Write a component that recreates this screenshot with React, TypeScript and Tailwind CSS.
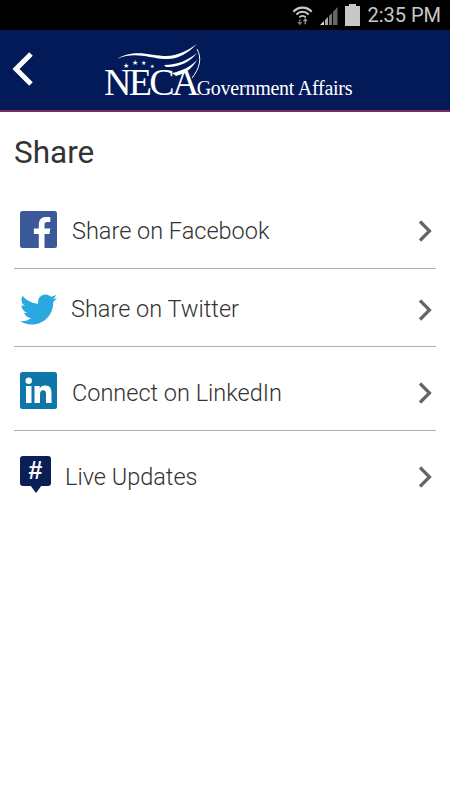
import React from "react";
import { FaTwitter } from "react-icons/fa";

const Chevron = ({ cls }: { cls: string }) => (
  <svg width="16" height="24" viewBox="0 0 16 24" className={`shrink-0 ${cls}`}>
    <path d="M3 2.500 L12.500 12 L3 21.500" fill="none" stroke="#666" strokeWidth="3.200" />
  </svg>
);

const Facebook = () => (
  <svg width="37" height="37" viewBox="0 0 37 37">
    <rect width="37" height="37" rx="2.500" fill="#3b5998" />
    <path d="M25.500 37V23h5l.8-5.600h-5.800v-3.600c0-1.600.5-2.700 2.800-2.700h3V6.200c-.5-.1-2.300-.2-4.300-.2-4.300 0-7.200 2.600-7.200 7.400v4h-4.900V23h4.900v14z" fill="#fff" transform="translate(-1 0)" />
  </svg>
);

const Linkedin = () => (
  <svg width="37" height="37" viewBox="0 0 37 37">
    <rect width="37" height="37" rx="2.500" fill="#0e76a8" />
    <circle cx="8.700" cy="8.800" r="3.200" fill="#fff" />
    <rect x="6" y="14" width="5.500" height="17" fill="#fff" />
    <path d="M14.500 14h5.200v2.400c.9-1.600 2.900-2.800 5.400-2.800 5 0 6.400 3.100 6.400 7.600V31h-5.500v-8.700c0-2.200-.5-4-2.800-4-2.400 0-3.200 1.800-3.200 4V31h-5.500z" fill="#fff" />
  </svg>
);

const LiveUpdates = () => (
  <div className="relative w-[31px] h-[37px] shrink-0">
    <div className="w-[31px] h-[30px] rounded-[3px] bg-[#0b1f56] flex items-center justify-center text-white text-[25px] font-bold leading-none font-['Liberation_Sans',sans-serif]">
      #
    </div>
    <svg width="12" height="8" viewBox="0 0 12 8" className="absolute left-[10px] top-[29px]">
      <path d="M0 0H12L6 8Z" fill="#0b1f56" />
    </svg>
  </div>
);

const Row = ({ icon, label, h, gap, iconCls, textCls, chevCls, iconW = "w-[37px]" }: { icon: React.ReactNode; label: string; h: string; gap: string; iconCls: string; textCls: string; chevCls: string; iconW?: string }) => (
  <div className={`flex items-center pl-[6px] pr-[3px] ${h}`}>
    <div className={`shrink-0 flex items-center justify-start ${iconW} ${iconCls}`}>{icon}</div>
    <span className={`flex-1 text-[23.500px] leading-none text-[#333] font-light font-['Roboto',sans-serif] ${gap} ${textCls}`}>{label}</span>
    <Chevron cls={chevCls} />
  </div>
);

export default function App() {
  return (
    <div className="w-[450px] h-[800px] bg-white flex flex-col overflow-hidden">
      <div className="h-[30px] bg-black flex items-center justify-end pr-[9px] shrink-0">
        <svg width="22" height="24" viewBox="0 0 24 24" className="mr-[5px]">
          <path d="M1.500 8.500C7 2.500 16 2.500 21.500 8.500" fill="none" stroke="#c8c8c8" strokeWidth="2.300" />
          <path d="M4.800 11.500C8.500 7.500 14.500 7.500 18.200 11.500" fill="none" stroke="#c8c8c8" strokeWidth="2.200" />
          <path d="M8 14.500C10 12.500 13 12.500 15 14.500" fill="none" stroke="#c8c8c8" strokeWidth="2" />
          <path d="M8.500 16.500V22M6.500 19.800L8.500 22L10.500 19.800" fill="none" stroke="#777" strokeWidth="1.500" />
          <path d="M14.500 22V16.500M12.500 18.700L14.500 16.500L16.500 18.700" fill="none" stroke="#999" strokeWidth="1.500" />
        </svg>
        <svg width="20" height="20" viewBox="0 0 20 20" className="mr-[6px] mt-[2px]">
          <path d="M1 19L5 15V19Z" fill="#ddd" />
          <path d="M6 14L9 11V19H6Z" fill="#aaa" />
          <path d="M10 10L13 7V19H10Z" fill="#777" />
          <path d="M14 6L18.500 1V19H14Z" fill="#666" />
        </svg>
        <div className="flex flex-col items-center mr-[7px]">
          <div className="w-[7px] h-[2px] bg-[#c8c8c8]" />
          <div className="w-[15px] h-[20px] bg-[#c8c8c8]" />
        </div>
        <span className="text-[20px] leading-none text-[#c8c8c8] font-['Roboto',sans-serif]">2:35 PM</span>
      </div>

      <div className="h-[82px] bg-[#031a58] border-b-2 border-[#7c2a5e] flex items-center shrink-0">
        <svg width="24" height="36" viewBox="0 0 24 36" className="ml-[11px] mb-[2px]">
          <path d="M20 3 L5 18 L20 33" fill="none" stroke="#fff" strokeWidth="5" />
        </svg>
        <div className="ml-[69px] relative w-[256px] h-[60px]">
          <svg width="110" height="42" viewBox="0 0 110 42" className="absolute left-0 top-0">
            <path d="M13 19C30 8 48 16 62 16C74 16 84 10 93 4C84 13 74 20 60 19C46 18 30 11 13 19Z" fill="#fff" />
            <path d="M60 25C74 25 84 20 93 13C86 22 74 28 62 27Z" fill="#fff" />
            <path d="M68 33C78 31 86 27 93 20C88 29 80 34 72 36Z" fill="#fff" />
            <path d="M93 9C98 18 96 28 88 38" fill="none" stroke="#fff" strokeWidth="1" />
            <text x="19" y="28" fontSize="7" fill="#fff">★</text>
            <text x="28" y="25" fontSize="7" fill="#fff">★</text>
            <text x="37" y="25" fontSize="6" fill="#fff">★</text>
            <text x="46" y="28" fontSize="5" fill="#fff">★</text>
          </svg>
          <div className="absolute left-0 top-[23px] flex items-baseline font-['Liberation_Serif',serif] text-white whitespace-nowrap">
            <span className="text-[38px] leading-[38px] tracking-[-2.700px]">NECA</span>
            <span className="text-[20px] leading-none tracking-[-0.25px]">Government Affairs</span>
          </div>
        </div>
      </div>

      <div className="px-[14px] flex-1">
        <h1 className="text-[31.500px] leading-none text-[#333] font-normal font-['Roboto',sans-serif] pt-[25px] pb-[20px]">Share</h1>
        <div className="border-b border-[#b0b0b0]">
          <Row icon={<Facebook />} label="Share on Facebook" h="h-[79px]" gap="ml-[15px]" iconCls="mt-[2px]" textCls="mt-[8px]" chevCls="mt-[6px]" />
        </div>
        <div className="border-b border-[#b0b0b0]">
          <Row icon={<FaTwitter size={37} color="#2aa9e0" />} label="Share on Twitter" h="h-[77px]" gap="ml-[14px]" iconCls="mt-[4px]" textCls="mt-[6px]" chevCls="mt-[6px]" />
        </div>
        <div className="border-b border-[#b0b0b0]">
          <Row icon={<Linkedin />} label="Connect on LinkedIn" h="h-[83px]" gap="ml-[15px]" iconCls="mt-[4px]" textCls="mt-[12px]" chevCls="mt-[10px]" />
        </div>
        <Row icon={<LiveUpdates />} label="Live Updates" h="h-[95px]" gap="ml-[14px]" iconW="w-[31px]" iconCls="mb-[8px]" textCls="" chevCls="mb-[2px]" />
      </div>
    </div>
  );
}
